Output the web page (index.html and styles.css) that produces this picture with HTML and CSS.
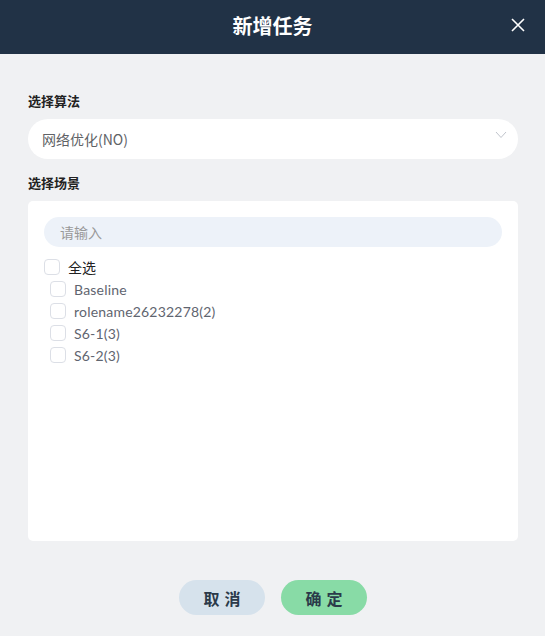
FILE: index.html
```html
<!DOCTYPE html>
<html lang="zh">
<head>
<meta charset="utf-8">
<title>新增任务</title>
<link rel="stylesheet" href="styles.css">
</head>
<body>
<div class="dialog">
  <header class="dialog-header">
    <h1 class="dialog-title">新增任务</h1>
    <button class="close-btn" aria-label="关闭">
      <svg width="14" height="14" viewBox="0 0 14 14"><path d="M1 1L13 13M13 1L1 13" stroke="#fff" stroke-width="1.6" fill="none"/></svg>
    </button>
  </header>
  <main class="dialog-body">
    <div class="field-label">选择算法</div>
    <div class="select">
      <span class="select-value">网络优化(NO)</span>
      <svg class="chevron" width="12" height="8" viewBox="0 0 12 8"><path d="M1 1L6 6.5L11 1" stroke="#c0c4cc" stroke-width="1" fill="none"/></svg>
    </div>
    <div class="field-label second">选择场景</div>
    <div class="panel">
      <div class="search">请输入</div>
      <ul class="tree">
        <li class="row root"><span class="box"></span><span class="label">全选</span></li>
        <li class="row child"><span class="box"></span><span class="label">Baseline</span></li>
        <li class="row child"><span class="box"></span><span class="label">rolename26232278(2)</span></li>
        <li class="row child"><span class="box"></span><span class="label">S6-1(3)</span></li>
        <li class="row child"><span class="box"></span><span class="label">S6-2(3)</span></li>
      </ul>
    </div>
    <div class="actions">
      <button class="btn cancel">取消</button>
      <button class="btn confirm">确定</button>
    </div>
  </main>
</div>
</body>
</html>
```

FILE: styles.css
```css
* { box-sizing: border-box; }
html, body {
  margin: 0;
  padding: 0;
  width: 545px;
  height: 636px;
  background: #f0f1f3;
  font-family: "Lato", "Noto Sans CJK SC", sans-serif;
  overflow: hidden;
}
.dialog { width: 545px; height: 636px; display: flex; flex-direction: column; }
.dialog-header {
  height: 54px;
  background: #213246;
  display: flex;
  align-items: center;
  justify-content: center;
  position: relative;
  padding-bottom: 2px;
}
.dialog-title {
  margin: 0;
  color: #fff;
  font-family: "Noto Sans CJK SC", sans-serif;
  font-size: 20px;
  font-weight: 700;
  line-height: 1;
}
.close-btn {
  position: absolute;
  right: 20px;
  top: 18px;
  width: 14px;
  height: 14px;
  padding: 0;
  border: 0;
  background: none;
  display: flex;
}
.dialog-body {
  padding: 37px 27px 0 28px;
  display: flex;
  flex-direction: column;
}
.field-label {
  font-family: "Noto Sans CJK SC", sans-serif;
  font-size: 13px;
  font-weight: 700;
  color: #222;
  line-height: 20px;
  height: 20px;
}
.field-label.second { margin-top: 14px; }
.select {
  margin-top: 8px;
  height: 40px;
  background: #fff;
  border-radius: 20px;
  display: flex;
  align-items: center;
  justify-content: space-between;
  padding: 0 11px 0 14px;
}
.select-value {
  font-family: "Noto Sans CJK SC", sans-serif;
  font-size: 14px;
  color: #606266;
  font-weight: 400;
}
.chevron { margin-top: -8px; }
.panel {
  margin-top: 8px;
  height: 340px;
  background: #fff;
  border-radius: 5px;
  padding: 16px 16px;
}
.search {
  height: 30px;
  border-radius: 15px;
  background: #edf2f9;
  padding-left: 16px;
  font-family: "Noto Sans CJK SC", sans-serif;
  font-size: 14px;
  color: #999;
  line-height: 30px;
}
.tree { list-style: none; margin: 9px 0 0; padding: 0; }
.row {
  height: 22px;
  display: flex;
  align-items: center;
  font-size: 14px;
}
.row.child { padding-left: 6px; }
.box {
  width: 16px;
  height: 16px;
  border: 1px solid #dcdfe6;
  border-radius: 4px;
  background: #fff;
  flex: none;
}
.label { margin-left: 8px; }
.root .label { color: #222; font-family: "Noto Sans CJK SC", sans-serif; }
.child .label { color: #5f6570; letter-spacing: 0.2px; }
.actions {
  margin-top: 39px;
  display: flex;
  justify-content: center;
  gap: 16px;
}
.btn {
  width: 86px;
  height: 35px;
  border: 0;
  border-radius: 18px;
  font-family: "Noto Sans CJK SC", sans-serif;
  font-size: 16px;
  font-weight: 700;
  letter-spacing: 5px;
  padding: 0 0 0 5px;
  color: #2b3a4a;
}
.cancel { background: #d6e2ec; }
.confirm { background: #88dba6; }
```
